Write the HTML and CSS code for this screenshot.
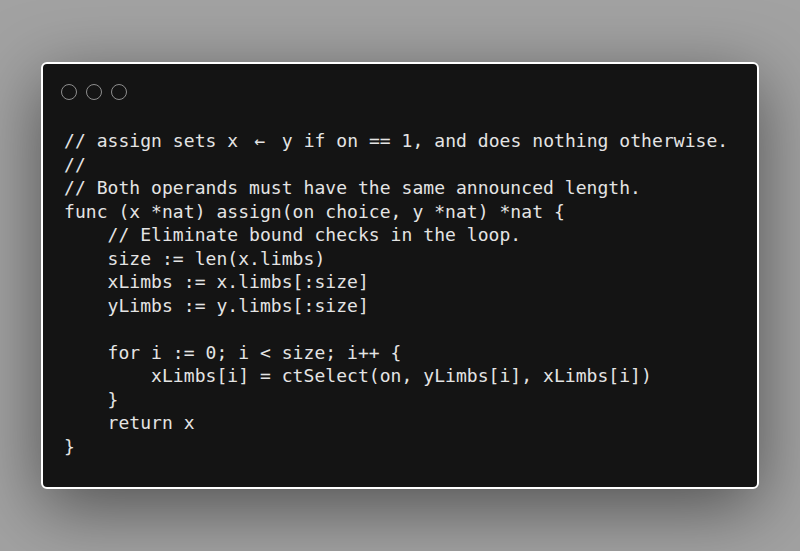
FILE: index.html
```html
<!DOCTYPE html>
<html>
<head>
<meta charset="utf-8">
<link rel="stylesheet" href="styles.css">
</head>
<body>
<div class="window">
  <div class="dots">
    <span class="dot"></span><span class="dot"></span><span class="dot"></span>
  </div>
  <div class="code">
    <div class="line">// assign sets x <span class="lig">←</span> y if on == 1, and does nothing otherwise.</div>
    <div class="line">//</div>
    <div class="line">// Both operands must have the same announced length.</div>
    <div class="line">func (x *nat) assign(on choice, y *nat) *nat {</div>
    <div class="line">    // Eliminate bound checks in the loop.</div>
    <div class="line">    size := len(x.limbs)</div>
    <div class="line">    xLimbs := x.limbs[:size]</div>
    <div class="line">    yLimbs := y.limbs[:size]</div>
    <div class="line"></div>
    <div class="line">    for i := 0; i &lt; size; i++ {</div>
    <div class="line">        xLimbs[i] = ctSelect(on, yLimbs[i], xLimbs[i])</div>
    <div class="line">    }</div>
    <div class="line">    return x</div>
    <div class="line">}</div>
  </div>
</div>
</body>
</html>
```
FILE: styles.css
```css
html, body {
  margin: 0;
  height: 100%;
}
body {
  background: #a2a2a2;
  box-sizing: border-box;
  padding: 62px 41px;
  display: flex;
  flex-direction: column;
}
.window {
  flex: 1;
  background: #141414;
  border: 2px solid #ffffff;
  border-radius: 6px;
  box-shadow: 0 18px 70px rgba(0, 0, 0, 0.5);
  padding: 20px 20px 0 18px;
  display: flex;
  flex-direction: column;
}
.dots {
  display: flex;
  gap: 9px;
}
.dot {
  width: 14px;
  height: 14px;
  border: 1.6px solid #8e8e8e;
  border-radius: 50%;
}
.code {
  margin: 29px 0 0 3px;
  font-family: "DejaVu Sans Mono", monospace;
  font-size: 18px;
  letter-spacing: 0.05px;
  line-height: 23.5px;
  color: #e4e4e4;
}
.line {
  white-space: pre;
  min-height: 23.5px;
}
.lig {
  padding: 0 5.5px;
}
```
